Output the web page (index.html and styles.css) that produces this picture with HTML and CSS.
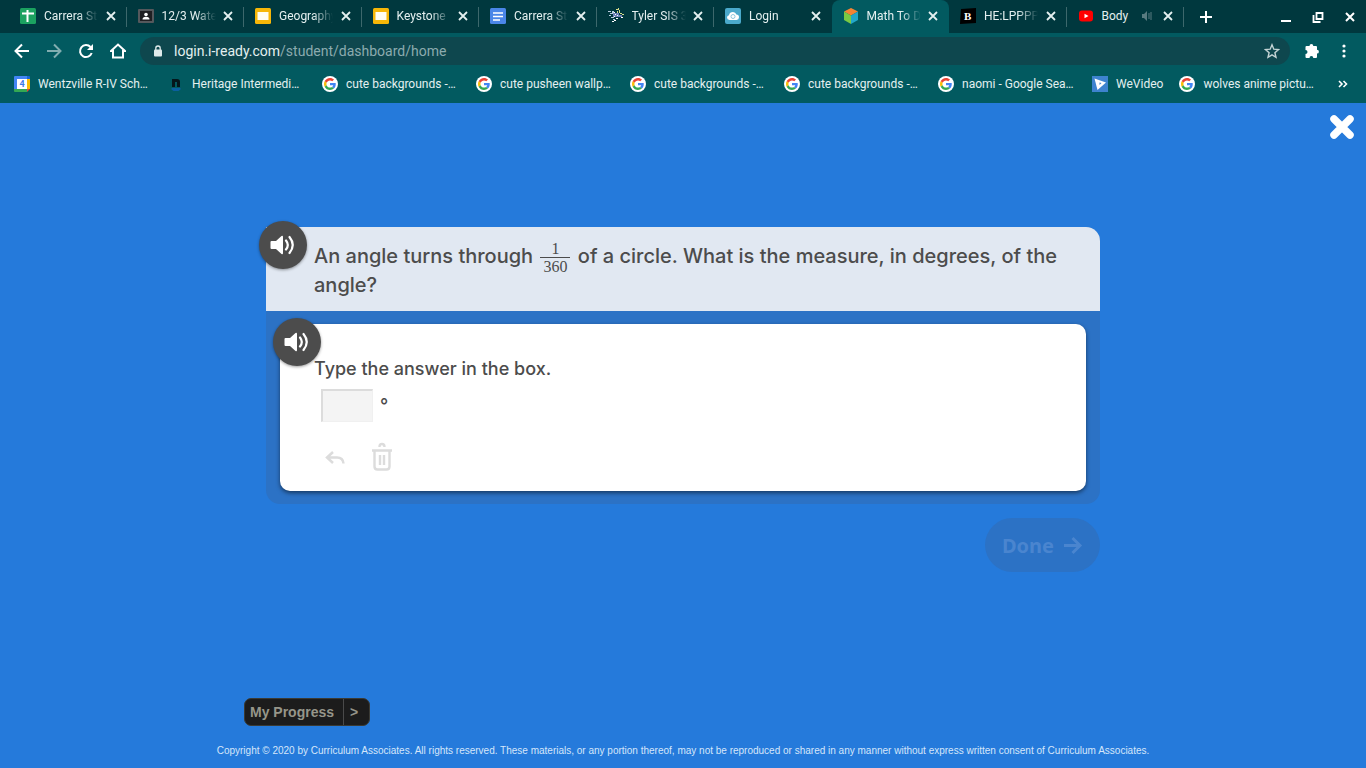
FILE: index.html
```html
<!DOCTYPE html>
<html lang="en">
<head>
  <meta charset="UTF-8">
  <meta name="viewport" content="width=device-width, initial-scale=1.0">
  <title>Math To Do</title>
  <link rel="stylesheet" href="styles.css">
</head>
<body>
  <!-- shared icons -->
  <svg class="sprite" aria-hidden="true">
    <symbol id="x" viewBox="0 0 10 10"><path d="M1 1l8 8M9 1L1 9" stroke="currentColor" stroke-width="1.800" fill="none"/></symbol>
    <symbol id="google" viewBox="0 0 16 16">
      <circle cx="8" cy="8" r="8" fill="#fff"/>
      <g transform="translate(2 2) scale(.25)">
        <path fill="#EA4335" d="M24 9.500c3.540 0 6.710 1.220 9.210 3.600l6.850-6.850C35.900 2.380 30.470 0 24 0 14.620 0 6.510 5.380 2.560 13.220l7.980 6.190C12.430 13.720 17.740 9.500 24 9.500z"/>
        <path fill="#4285F4" d="M46.980 24.550c0-1.570-.15-3.090-.38-4.550H24v9.020h12.940c-.58 2.960-2.260 5.480-4.780 7.180l7.730 6c4.510-4.180 7.090-10.360 7.090-17.650z"/>
        <path fill="#FBBC05" d="M10.530 28.590c-.48-1.450-.76-2.990-.76-4.590s.27-3.140.76-4.590l-7.980-6.190C.92 16.460 0 20.120 0 24s.92 7.540 2.560 10.780z"/>
        <path fill="#34A853" d="M24 48c6.480 0 11.930-2.130 15.890-5.810l-7.730-6c-2.150 1.450-4.920 2.300-8.160 2.300-6.260 0-11.570-4.220-13.470-9.910l-7.980 6.190C6.510 42.620 14.620 48 24 48z"/>
      </g>
    </symbol>
    <symbol id="slides" viewBox="0 0 16 16"><rect width="16" height="16" rx="1.500" fill="#f7b708"/><rect x="2.500" y="4" width="11" height="8" fill="#fffdf2"/></symbol>
    <symbol id="speaker" viewBox="0 0 26 20">
      <path d="M1.500 6H6l5.500-5q1.500-.8 1.500 1v16q0 1.800-1.500 1L6 14H1.500Q.5 14 .5 13V7q0-1 1-1z" fill="#fff"/>
      <path d="M16 5.500q3.600 4.500 0 9M19.500 2q6.500 8 0 16" fill="none" stroke="#fff" stroke-width="2.200" stroke-linecap="round"/>
    </symbol>
  </svg>

  <header class="browser">
    <div class="tab-strip">
      <nav class="tabs">
        <div class="tab">
          <svg class="icon" viewBox="0 0 16 16"><rect width="16" height="16" rx="1.500" fill="#1ba260"/><path d="M2 5.500h12M7.500 2v12" stroke="#fff" stroke-width="2"/></svg>
          <a href="#" class="tab-title">Carrera St</a>
          <button class="tab-close" aria-label="Close tab"><svg><use href="#x"/></svg></button>
        </div>
        <div class="tab">
          <svg class="icon" viewBox="0 0 16 16"><rect y="1" width="16" height="14" rx="1" fill="#55585c"/><rect x="2" y="3" width="12" height="10" fill="#1f1f22"/><circle cx="8" cy="6.500" r="1.800" fill="#fff"/><path d="M4.500 11.500q0-2.700 3.500-2.700t3.500 2.700z" fill="#fff"/></svg>
          <a href="#" class="tab-title">12/3 Water</a>
          <button class="tab-close" aria-label="Close tab"><svg><use href="#x"/></svg></button>
        </div>
        <div class="tab">
          <svg class="icon"><use href="#slides"/></svg>
          <a href="#" class="tab-title">Geography</a>
          <button class="tab-close" aria-label="Close tab"><svg><use href="#x"/></svg></button>
        </div>
        <div class="tab">
          <svg class="icon"><use href="#slides"/></svg>
          <a href="#" class="tab-title">Keystone</a>
          <button class="tab-close" aria-label="Close tab"><svg><use href="#x"/></svg></button>
        </div>
        <div class="tab">
          <svg class="icon" viewBox="0 0 16 16"><rect width="16" height="16" rx="1.500" fill="#4a86e8"/><path d="M3 5h10M3 8.500h10M3 12h7" stroke="#fff" stroke-width="1.600"/></svg>
          <a href="#" class="tab-title">Carrera St</a>
          <button class="tab-close" aria-label="Close tab"><svg><use href="#x"/></svg></button>
        </div>
        <div class="tab">
          <svg class="icon" viewBox="0 0 16 16">
            <path d="M0 3h3v1H0zM2 5h3v1H2zM1 7h2v1H1zM4 3h2v2H4zM3 9h3v1H3zM5 11h2v1H5z" fill="#b9cde0"/>
            <path d="M5 5h6v4H5zM11 7h3v2h-3z" fill="#6f83b8"/>
            <path d="M6 4h1v1H6zM7 6h1v1H7zM9 7h1v1H9zM6 8h1v1H6zM4 13h2v1H4zM6 12h2v1H6zM8 10h2v1H8zM13 9h2v1h-2z" fill="#fff"/>
            <path d="M8 1h2v1H8zM10 0h1v2h-1zM11 2h1v3h-1zM9 3h1v2H9zM12 5h2v1h-2zM14 6h2v1h-2z" fill="#d5dc8c"/>
          </svg>
          <a href="#" class="tab-title">Tyler SIS 3</a>
          <button class="tab-close" aria-label="Close tab"><svg><use href="#x"/></svg></button>
        </div>
        <div class="tab before-active">
          <svg class="icon" viewBox="0 0 16 16"><rect width="16" height="16" rx="2" fill="#4aa9cb"/><path d="M4.500 12Q2 12 2 9.600 2 7.600 4 7.200 4.600 4 8 4q2.600 0 3.400 2.600Q14 6.800 14 9.300T11.500 12z" fill="#fff"/><circle cx="8" cy="8.500" r="2" fill="none" stroke="#8fc9de"/></svg>
          <a href="#" class="tab-title">Login</a>
          <button class="tab-close" aria-label="Close tab"><svg><use href="#x"/></svg></button>
        </div>
        <div class="tab active">
          <svg class="icon" viewBox="0 0 16 16"><path d="M8 0l7 3.500L8 7.500 1 3.500z" fill="#f58434"/><path d="M1 3.500l7 4V16l-7-4z" fill="#7ac943"/><path d="M15 3.500l-7 4V16l7-4z" fill="#22a7c9"/></svg>
          <a href="#" class="tab-title">Math To Do</a>
          <button class="tab-close" aria-label="Close tab"><svg><use href="#x"/></svg></button>
        </div>
        <div class="tab">
          <svg class="icon" viewBox="0 0 16 16"><path d="M1 1l15-1v15L0 16z" fill="#000"/><text x="4" y="12" class="brand-b">B</text></svg>
          <a href="#" class="tab-title">HE:LPPPPP</a>
          <button class="tab-close" aria-label="Close tab"><svg><use href="#x"/></svg></button>
        </div>
        <div class="tab">
          <svg class="icon" viewBox="0 0 16 16"><rect x="1" y="2.500" width="14" height="11" rx="3" fill="#f00"/><path d="M6.500 5.700v4.600l4-2.300z" fill="#fff"/></svg>
          <a href="#" class="tab-title short">Body</a>
          <svg class="audio" viewBox="0 0 12 12"><path d="M1 4h2l3-3v10L3 8H1z" fill="#587b80"/><path d="M8 3v6M10 2v8" stroke="#587b80"/></svg>
          <button class="tab-close" aria-label="Close tab"><svg><use href="#x"/></svg></button>
        </div>
      </nav>
      <div class="window-controls">
        <button class="new-tab" aria-label="New tab"><svg viewBox="0 0 12 12"><path d="M6 0v12M0 6h12" stroke="#fff" stroke-width="2"/></svg></button>
        <button aria-label="Minimize"><svg viewBox="0 0 12 12"><path d="M1 10h10" stroke="#fff" stroke-width="2"/></svg></button>
        <button aria-label="Restore"><svg viewBox="0 0 12 12" fill="none" stroke="#fff" stroke-width="1.800"><path d="M4.500 2h6v6h-6z"/><path d="M1.500 4v7h7"/></svg></button>
        <button aria-label="Close window"><svg viewBox="0 0 12 12"><path d="M2 2l8 8M10 2l-8 8" stroke="#fff" stroke-width="2"/></svg></button>
      </div>
    </div>

    <div class="toolbar">
      <button aria-label="Back"><svg viewBox="0 0 16 16"><path d="M15 8H2M8 1.500L1.500 8 8 14.500"/></svg></button>
      <button class="dim" aria-label="Forward"><svg viewBox="0 0 16 16"><path d="M1 8h13M8 1.500L14.500 8 8 14.500"/></svg></button>
      <button aria-label="Reload"><svg viewBox="0 0 16 16"><path d="M13.700 10A6 6 0 1 1 12.500 4"/><path d="M15 1v6H9z" fill="#fff" stroke="none"/></svg></button>
      <button aria-label="Home"><svg viewBox="0 0 16 16"><path d="M1 8l7-6.500L15 8h-2v6.500H3V8z"/></svg></button>
      <div class="address">
        <svg class="lock" viewBox="0 0 10 12"><rect x="1" y="4.500" width="8" height="7" rx="1" fill="#dfeaea"/><path d="M2.800 5V3.200a2.200 2.200 0 0 1 4.400 0V5" fill="none" stroke="#dfeaea" stroke-width="1.300"/></svg>
        <a href="#" class="url">login.i-ready.com<span>/student/dashboard/home</span></a>
        <button class="star" aria-label="Bookmark this page"><svg viewBox="0 0 16 16"><path d="M8 1.800l1.800 4.400 4.700.4-3.600 3.100 1.100 4.600L8 11.800l-4 2.500 1.100-4.600-3.600-3.100 4.700-.4z"/></svg></button>
      </div>
      <button aria-label="Extensions"><svg viewBox="0 0 16 16"><path d="M1.500 4q0-1 1-1H5.500a1.900 1.900 0 1 1 3.800 0H12q1 0 1 1v2.800a1.900 1.900 0 1 1 0 3.800V14q0 1-1 1H9.300a1.900 1.900 0 0 0-3.800 0h-3q-1 0-1-1v-3a2 2 0 0 0 0-4z" fill="#fff" stroke="none"/></svg></button>
      <button aria-label="Menu"><svg viewBox="0 0 16 16"><g fill="#fff" stroke="none"><circle cx="8" cy="3" r="1.600"/><circle cx="8" cy="8" r="1.600"/><circle cx="8" cy="13" r="1.600"/></g></svg></button>
    </div>

    <nav class="bookmarks">
      <a href="#"><svg class="icon" viewBox="0 0 16 16"><path d="M0 1q0-1 1-1h12v3H3v10H0z" fill="#4285f4"/><path d="M13 0h2q1 0 1 1v2h-3z" fill="#1967d2"/><path d="M13 3h3v10h-3z" fill="#fbbc04"/><path d="M0 13h13v3H1q-1 0-1-1z" fill="#34a853"/><path d="M13 13h3l-3 3z" fill="#ea4335"/><path d="M3 3h10v10H3z" fill="#fff"/><text x="5.500" y="11.200" class="day">4</text></svg>Wentzville R-IV Sch…</a>
      <a href="#"><svg class="icon" viewBox="0 0 16 16"><path d="M4 11V3h5q3 0 3 3v5H9V6H7v5z" fill="#04161c"/><path d="M3.500 12h9v1.500l-2 1.500h-5l-2-1.500z" fill="#0b5fa0"/></svg>Heritage Intermedi…</a>
      <a href="#"><svg class="icon"><use href="#google"/></svg>cute backgrounds -…</a>
      <a href="#"><svg class="icon"><use href="#google"/></svg>cute pusheen wallp…</a>
      <a href="#"><svg class="icon"><use href="#google"/></svg>cute backgrounds -…</a>
      <a href="#"><svg class="icon"><use href="#google"/></svg>cute backgrounds -…</a>
      <a href="#"><svg class="icon"><use href="#google"/></svg>naomi - Google Sea…</a>
      <a href="#" class="fit"><svg class="icon" viewBox="0 0 16 16"><rect width="16" height="16" fill="#3d83cf"/><path d="M2.500 2.500l11.500 4-8.500 7.500z" fill="#fff"/><path d="M7.500 6.500l2 .6-2 2z" fill="#3d83cf"/></svg>WeVideo</a>
      <a href="#"><svg class="icon"><use href="#google"/></svg>wolves anime pictu…</a>
      <button class="more" aria-label="More bookmarks"><svg viewBox="0 0 10 8"><path d="M1 1l3 3-3 3M5.500 1l3 3-3 3" fill="none" stroke="#fff" stroke-width="1.600"/></svg></button>
    </nav>
  </header>

  <main class="lesson">
    <button class="exit" aria-label="Exit lesson"><svg viewBox="0 0 26 26"><path d="M5 5l16 16M21 5L5 21" stroke="#fff" stroke-width="7.500" stroke-linecap="round"/></svg></button>

    <form class="problem">
      <div class="card">
        <section class="question">
          <button type="button" class="listen" aria-label="Read the question"><svg><use href="#speaker"/></svg></button>
          <p>An angle turns through <span class="fraction"><span>1</span><span class="bottom">360</span></span> of a circle. What is the measure, in degrees, of the angle?</p>
        </section>
        <section class="answer">
          <button type="button" class="listen" aria-label="Read the directions"><svg><use href="#speaker"/></svg></button>
          <label for="degrees">Type the answer in the box.</label>
          <div class="entry"><input type="text" id="degrees" autocomplete="off"><span>°</span></div>
          <div class="tools">
            <button type="button" aria-label="Undo" disabled><svg viewBox="0 0 20 30"><path d="M8 10L2 15.500 8 21M2.500 15.500H12q6 0 6.500 6" fill="none" stroke="#dcdcdc" stroke-width="2.500"/></svg></button>
            <button type="button" aria-label="Clear" disabled><svg viewBox="0 0 20 30"><path d="M7.500 5q0-3 2.500-3t2.500 3M0 8.500h20M2.500 9v15.500q0 3 3 3h9q3 0 3-3V9M8 13v10M12 13v10" fill="none" stroke="#dcdcdc" stroke-width="2.400"/></svg></button>
          </div>
        </section>
      </div>
      <button class="done" disabled>Done <svg viewBox="0 0 20 20"><path d="M1 10.500h16M9.500 3L17 10.500 9.500 18" fill="none" stroke="currentColor" stroke-width="3"/></svg></button>
    </form>

    <footer>
      <div class="footer-row">
        <button class="progress"><span>My Progress</span><span class="arrow">&gt;</span></button>
      </div>
      <p>Copyright © 2020 by Curriculum Associates. All rights reserved. These materials, or any portion thereof, may not be reproduced or shared in any manner without express written consent of Curriculum Associates.</p>
    </footer>
  </main>
</body>
</html>
```

FILE: styles.css
```css
* {
  box-sizing: border-box;
}
body {
  margin: 0;
  min-height: 100vh;
  display: flex;
  flex-direction: column;
  background-color: #257adb;
  font-family: Roboto, sans-serif;
}
button {
  padding: 0;
  border: none;
  background: none;
  color: inherit;
  font: inherit;
}
a {
  color: inherit;
  text-decoration: none;
}
svg {
  display: block;
  flex: none;
}
.sprite {
  position: absolute;
  width: 0;
  height: 0;
}
.icon {
  width: 16px;
  height: 16px;
}
.brand-b {
  fill: #fff;
  font: 700 11px "Liberation Serif", serif;
}
.day {
  fill: #3b78e7;
  font: 700 9px Roboto, sans-serif;
}

/* Browser bars */
.browser {
  background-color: #025a60;
  color: #e4f0f0;
  font-size: 12px;
}
.tab-strip {
  display: flex;
  height: 33px;
  background-color: #00383e;
}
.tabs {
  display: flex;
  flex: 1;
  min-width: 0;
  padding-left: 9px;
}
.tab {
  flex: 1;
  min-width: 0;
  display: flex;
  align-items: center;
  padding: 0 11px 1px 11px;
  background: linear-gradient(#3d686c, #3d686c) no-repeat right center / 1px 20px;
}
.tab-title {
  flex: 1;
  min-width: 0;
  margin-left: 8px;
  overflow: hidden;
  white-space: nowrap;
  -webkit-mask-image: linear-gradient(to right, #000 34px, transparent 54px);
  mask-image: linear-gradient(to right, #000 34px, transparent 54px);
}
.tab-title.short {
  -webkit-mask-image: none;
  mask-image: none;
}
.tab-close svg {
  width: 10px;
  height: 10px;
}
.audio {
  width: 12px;
  height: 12px;
  margin-right: 10px;
}
.before-active {
  background: none;
}
.tab.active {
  background: #025a60;
  border-radius: 8px 8px 0 0;
}
.window-controls {
  display: flex;
  align-items: center;
  width: 182px;
  padding: 0 10px 0 16px;
  gap: 20px;
}
.window-controls svg {
  width: 12px;
  height: 12px;
}
.new-tab {
  margin-right: auto;
}
.toolbar {
  display: flex;
  align-items: center;
  gap: 16px;
  height: 36px;
  padding: 0 14px;
}
.toolbar svg {
  width: 16px;
  height: 16px;
  fill: none;
  stroke: #fff;
  stroke-width: 2;
}
.toolbar .dim {
  opacity: 0.5;
}
.address {
  flex: 1;
  display: flex;
  align-items: center;
  height: 28px;
  margin-left: -2px;
  margin-right: -2px;
  padding: 0 10px 0 12px;
  border-radius: 14px;
  background-color: #0e474e;
  font-size: 14px;
}
.toolbar .lock {
  width: 12px;
  height: 12px;
  stroke: none;
}
.url {
  flex: 1;
  margin-left: 10px;
}
.url span {
  color: #8cabae;
}
.address .star svg {
  stroke: #c3d3d4;
  stroke-width: 1.4;
}
.bookmarks {
  display: flex;
  align-items: center;
  gap: 16px;
  height: 34px;
  padding: 0 18px 4px 14px;
}
.bookmarks a {
  flex: none;
  display: flex;
  align-items: center;
  gap: 8px;
  width: 138px;
  white-space: nowrap;
}
.bookmarks .fit {
  width: auto;
}
.more {
  margin-left: auto;
}
.more svg {
  width: 10px;
  height: 8px;
}

/* Lesson */
.lesson {
  position: relative;
  flex: 1;
  display: flex;
  flex-direction: column;
  padding: 124px 16px 11px;
  color: #4c4c4c;
}
.exit {
  position: absolute;
  top: 11px;
  right: 11px;
}
.exit svg {
  width: 26px;
  height: 26px;
}
.problem {
  width: 100%;
  max-width: 834px;
  margin: 0 auto;
  font-family: Inter, sans-serif;
  font-weight: 500;
}
.card {
  padding-bottom: 13px;
  border-radius: 14px;
  background-color: #2c72c5;
}
.question {
  position: relative;
  padding: 15px 40px 11px 48px;
  border-radius: 0 14px 0 0;
  background-color: #e1e8f2;
  font-size: 20px;
  line-height: 29px;
}
.question p {
  margin: 0;
}
.fraction {
  display: inline-flex;
  flex-direction: column;
  width: 30px;
  margin: -5px 2px;
  vertical-align: middle;
  font-family: "Liberation Serif", serif;
  font-size: 16px;
  font-weight: 400;
  line-height: 16px;
  text-align: center;
}
.bottom {
  padding-top: 1px;
  border-top: 1px solid #4c4c4c;
}
.answer {
  position: relative;
  margin: 13px 14px 0;
  padding: 33px 34px 19px;
  border-radius: 10px;
  background-color: #fff;
  box-shadow: 0 2px 4px rgba(0, 0, 0, 0.5);
  font-size: 18px;
  line-height: 24px;
}
.listen {
  position: absolute;
  top: -6px;
  left: -7px;
  display: flex;
  align-items: center;
  justify-content: center;
  width: 48px;
  height: 48px;
  border-radius: 50%;
  background-color: #4c4c4c;
  box-shadow: 0 1px 3px rgba(0, 0, 0, 0.4);
}
.listen svg {
  width: 26px;
  height: 20px;
}
.answer label {
  display: block;
}
.entry {
  display: flex;
  gap: 7px;
  margin: 8px 0 0 7px;
}
.entry input {
  width: 52px;
  height: 33px;
  padding: 0 6px;
  border: 1px solid #f0f0f0;
  border-top: 2px solid #dcdcdc;
  border-left: 2px solid #dcdcdc;
  background-color: #f4f4f4;
  font: inherit;
}
.entry span {
  line-height: 33px;
}
.tools {
  display: flex;
  gap: 27px;
  margin: 20px 0 0 11px;
}
.tools svg {
  width: 20px;
  height: 30px;
}
.done {
  display: flex;
  align-items: center;
  justify-content: center;
  gap: 9px;
  width: 115px;
  height: 54px;
  margin: 14px 0 0 auto;
  border-radius: 27px;
  background-color: #2c72c5;
  color: #4a85cf;
  font-family: "Noto Sans", sans-serif;
  font-size: 20px;
  font-weight: 700;
}
.done svg {
  width: 20px;
  height: 20px;
}

/* Footer */
footer {
  margin-top: auto;
  font-family: "Liberation Sans", Arial, sans-serif;
}
.footer-row {
  max-width: 878px;
  margin: 0 auto;
}
.progress {
  display: flex;
  border: 1px solid #3a3a34;
  border-radius: 7px;
  background-color: #1c1c1c;
  color: #96968a;
  font-size: 14px;
  font-weight: 700;
  line-height: 26px;
}
.progress span {
  padding: 0 9px 0 5px;
}
.progress .arrow {
  padding: 0 11px 0 6px;
  border-left: 1px solid #4a4a4a;
}
footer p {
  margin: 19px 0 0;
  color: #d5e6fa;
  font-size: 10px;
  line-height: 12px;
  text-align: center;
}
```
